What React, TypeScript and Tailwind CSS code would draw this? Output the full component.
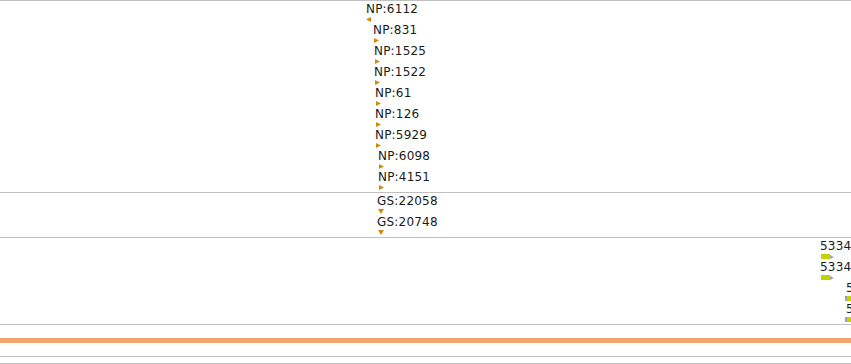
type Dir = "left" | "right" | "down";

type Feature = {
  label: string;
  textX: number;
  markX: number;
  dir: Dir;
};

type Block = {
  label: string;
  textX: number;
  barX: number;
  tail: "right" | "left";
};

const npRows: Feature[] = [
  { label: "NP:6112", textX: 366, markX: 366, dir: "left" },
  { label: "NP:831", textX: 373, markX: 374, dir: "right" },
  { label: "NP:1525", textX: 374, markX: 375, dir: "right" },
  { label: "NP:1522", textX: 374, markX: 375, dir: "right" },
  { label: "NP:61", textX: 375, markX: 376, dir: "right" },
  { label: "NP:126", textX: 375, markX: 376, dir: "right" },
  { label: "NP:5929", textX: 375, markX: 376, dir: "right" },
  { label: "NP:6098", textX: 378, markX: 379, dir: "right" },
  { label: "NP:4151", textX: 378, markX: 379, dir: "right" },
];

const gsRows: Feature[] = [
  { label: "GS:22058", textX: 377, markX: 378, dir: "down" },
  { label: "GS:20748", textX: 377, markX: 378, dir: "down" },
];

// features near the right edge run off the viewport
const blockRows: Block[] = [
  { label: "5334", textX: 820, barX: 821, tail: "right" },
  { label: "5334", textX: 820, barX: 821, tail: "right" },
  { label: "5334", textX: 846, barX: 845, tail: "left" },
  { label: "5334", textX: 846, barX: 845, tail: "left" },
];

const Marker = ({ dir }: { dir: Dir }) => {
  if (dir === "left") {
    return (
      <svg width="5" height="5" viewBox="0 0 5 5" className="block">
        <polygon points="5,0 5,5 0,2.5" fill="#cf8c08" />
      </svg>
    );
  }
  if (dir === "down") {
    return (
      <svg width="6" height="5" viewBox="0 0 6 5" className="block">
        <polygon points="0,0 6,0 3,5" fill="#cf8c08" />
      </svg>
    );
  }
  return (
    <svg width="5" height="5" viewBox="0 0 5 5" className="block">
      <polygon points="0,0 5,2.5 0,5" fill="#cf8c08" />
    </svg>
  );
};

const FeatureRow = ({ row }: { row: Feature }) => (
  <div className="h-[21px] shrink-0 pt-[2px] flex flex-col">
    <span
      className="text-[12px] leading-[12px] tracking-[0.2px] text-[#1a1a1a] whitespace-nowrap"
      style={{ marginLeft: row.textX }}
    >
      {row.label}
    </span>
    <div className="mt-[2px]" style={{ marginLeft: row.markX }}>
      <Marker dir={row.dir} />
    </div>
  </div>
);

const BlockRow = ({ row }: { row: Block }) => (
  <div className="h-[21px] shrink-0 pt-[2px] flex flex-col">
    <span
      className="text-[12px] leading-[12px] tracking-[0.2px] text-[#1a1a1a] whitespace-nowrap"
      style={{ marginLeft: row.textX }}
    >
      {row.label}
    </span>
    <div className="mt-[2px] flex items-center h-[5px]" style={{ marginLeft: row.barX }}>
      {row.tail === "left" && <div className="w-[2px] h-[5px] shrink-0 bg-[#a3a3a3]" />}
      <div className="w-[9px] h-[5px] bg-[#c4d300] shrink-0" />
      {row.tail === "right" && (
        <svg width="4" height="4" viewBox="0 0 4 4" className="block">
          <polygon points="0,0 4,2 0,4" fill="#a3a3a3" />
        </svg>
      )}
    </div>
  </div>
);

export default function App() {
  return (
    <div
      className="w-[851px] h-[364px] overflow-hidden bg-white flex flex-col"
      style={{ fontFamily: '"DejaVu Sans", Verdana, sans-serif' }}
    >
      <div className="h-[192px] shrink-0 border-t border-[#c0c0c0] flex flex-col overflow-hidden">
        {npRows.map((r, i) => (
          <FeatureRow key={i} row={r} />
        ))}
      </div>
      <div className="h-[45px] shrink-0 border-t border-[#c0c0c0] flex flex-col overflow-hidden">
        {gsRows.map((r, i) => (
          <FeatureRow key={i} row={r} />
        ))}
      </div>
      <div className="h-[87px] shrink-0 border-t border-[#c0c0c0] flex flex-col overflow-hidden">
        {blockRows.map((r, i) => (
          <BlockRow key={i} row={r} />
        ))}
      </div>
      <div className="h-[14px] shrink-0 border-t border-[#c0c0c0]" />
      <div className="h-[5px] shrink-0 bg-[#f5a46e]" />
      <div className="h-[13px] shrink-0" />
      <div className="h-[7px] shrink-0 border-t border-[#c0c0c0]" />
      <div className="h-[1px] shrink-0 border-t border-[#c0c0c0]" />
    </div>
  );
}
